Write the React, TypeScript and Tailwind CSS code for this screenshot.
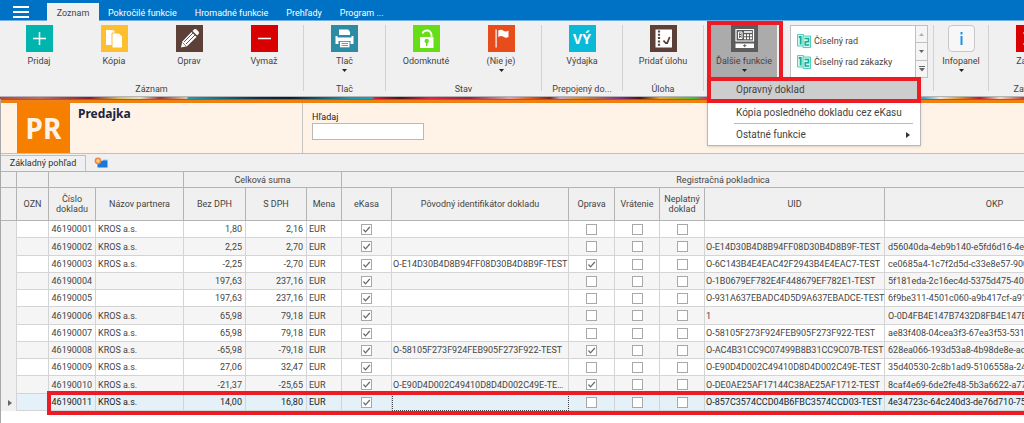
import type { ReactNode } from "react";

type DocumentRow = {
  id: string;
  partner: string;
  net: string;
  gross: string;
  originalId: string;
  correction: boolean;
  uid: string;
  okp: string;
};

const ROWS: DocumentRow[] = [
  { id: "46190001", partner: "KROS a.s.", net: "1,80", gross: "2,16", originalId: "", correction: false, uid: "", okp: "" },
  { id: "46190002", partner: "KROS a.s.", net: "2,25", gross: "2,70", originalId: "", correction: false, uid: "O-E14D30B4D8B94FF08D30B4D8B9F-TEST", okp: "d56040da-4eb9b140-e5fd6d16-4e" },
  { id: "46190003", partner: "KROS a.s.", net: "-2,25", gross: "-2,70", originalId: "O-E14D30B4D8B94FF08D30B4D8B9F-TEST", correction: true, uid: "O-6C143B4E4EAC42F2943B4E4EAC7-TEST", okp: "ce0685a4-1c7f2d5d-c33e8e57-900" },
  { id: "46190004", partner: "", net: "197,63", gross: "237,16", originalId: "", correction: false, uid: "O-1B0679EF782E4F448679EF782E1-TEST", okp: "5f181eda-2c16ec4d-5375d475-40f" },
  { id: "46190005", partner: "", net: "197,63", gross: "237,16", originalId: "", correction: false, uid: "O-931A637EBADC4D5D9A637EBADCE-TEST", okp: "6f9be311-4501c060-a9b417cf-a91" },
  { id: "46190006", partner: "KROS a.s.", net: "65,98", gross: "79,18", originalId: "", correction: false, uid: "1", okp: "O-0D4FB4E147B7432D8FB4E147B7" },
  { id: "46190007", partner: "KROS a.s.", net: "65,98", gross: "79,18", originalId: "", correction: false, uid: "O-58105F273F924FEB905F273F922-TEST", okp: "ae83f408-04cea3f3-67ea3f53-531" },
  { id: "46190008", partner: "KROS a.s.", net: "-65,98", gross: "-79,18", originalId: "O-58105F273F924FEB905F273F922-TEST", correction: true, uid: "O-AC4B31CC9C07499B8B31CC9C07B-TEST", okp: "628ea066-193d53a8-4b98de8e-ad" },
  { id: "46190009", partner: "KROS a.s.", net: "27,06", gross: "32,47", originalId: "", correction: false, uid: "O-E90D4D002C49410D8D4D002C49E-TEST", okp: "35d40530-2c8b1ad9-5106558a-24" },
  { id: "46190010", partner: "KROS a.s.", net: "-21,37", gross: "-25,65", originalId: "O-E90D4D002C49410D8D4D002C49E-TE…", correction: true, uid: "O-DE0AE25AF17144C38AE25AF1712-TEST", okp: "8caf4e69-6de2fe48-5b3a6622-a77" },
  { id: "46190011", partner: "KROS a.s.", net: "14,00", gross: "16,80", originalId: "", correction: false, uid: "O-857C3574CCD04B6FBC3574CCD03-TEST", okp: "4e34723c-64c240d3-de76d710-75" },
];

const SELECTED_ID = "46190011";

const TABS = ["Pokročilé funkcie", "Hromadné funkcie", "Prehľady", "Program ..."];

function Caret() {
  return (
    <svg viewBox="0 0 5 3" className="h-[3px] w-[5px]" aria-hidden="true">
      <path d="M0 0h5L2.5 3z" fill="#222" />
    </svg>
  );
}

function RibbonButton({
  label,
  tile,
  caret,
  className = "w-[75px]",
  children,
}: {
  label: string;
  tile: string;
  caret?: boolean;
  className?: string;
  children: ReactNode;
}) {
  return (
    <button type="button" className={`flex h-[53px] shrink-0 flex-col items-center whitespace-nowrap ${className}`}>
      <span className={`flex size-[27px] shrink-0 items-center justify-center ${tile}`}>{children}</span>
      <span className="mt-[3px] leading-3">{label}</span>
      {caret && (
        <span className="mt-[2px] flex">
          <Caret />
        </span>
      )}
    </button>
  );
}

function RibbonGroup({
  label,
  className,
  children,
}: {
  label?: string;
  className: string;
  children: ReactNode;
}) {
  return (
    <section className={`flex shrink-0 flex-col justify-between pt-1 pb-px ${className}`}>
      <div className="flex justify-center">{children}</div>
      {label && <h2 className="text-center leading-3 whitespace-nowrap">{label}</h2>}
    </section>
  );
}

function Divider() {
  return <div className="mt-1 mb-[5px] w-px shrink-0 bg-[#d2d2d2]" />;
}

function SeriesIcon() {
  return (
    <svg viewBox="0 0 14 14" className="h-[14px] w-[14px]" fill="none" aria-hidden="true">
      <path d="M.5.5h6v11.500h-6z" fill="#d5f5ee" stroke="#4fd0ba" />
      <path d="M1.800 3h1.900v7.500" stroke="#12b096" strokeWidth="1.800" />
      <path d="M6 2h7.500v11.500H6z" fill="#d5f5ee" stroke="#4fd0ba" />
      <path d="M7.500 4.500h4v3.200H8.300v3.300h4" stroke="#12b096" strokeWidth="1.600" />
    </svg>
  );
}

function Ribbon() {
  return (
    <div className="flex h-[76px] border-b border-[#b5b5b5] bg-[#f0f0f0] text-[9px] text-[#444]">
      <RibbonGroup label="Záznam" className="w-[303px]">
        <RibbonButton label="Pridaj" tile="bg-[#00b5ad]">
          <svg viewBox="0 0 27 27" stroke="#fff" strokeWidth="1.500">
            <path d="M13.500 7v13M7 13.500h13" />
          </svg>
        </RibbonButton>
        <RibbonButton label="Kópia" tile="bg-[#fdbf2d]">
          <svg viewBox="0 0 27 27" fill="#fff">
            <path d="M5 5h7l2 2v13H5z" />
            <path d="M11 8h7l3.500 3.500V23H11z" stroke="#fdbf2d" />
          </svg>
        </RibbonButton>
        <RibbonButton label="Oprav" tile="bg-[#5d4037]">
          <svg viewBox="0 0 27 27" fill="#fff">
            <path d="M5 22.500l1.300-6L15.500 7l5 5-9.500 9.200z" />
            <path d="M16.500 6l1.800-1.700q1-.8 2 0l2.400 2.500q.8 1 0 2L21.200 10.600z" />
            <path d="M8 17l9-9M10 19l9-9" stroke="#5d4037" strokeWidth=".9" />
            <path d="M6.500 17.500l3.500 3.500" stroke="#5d4037" strokeWidth=".7" />
          </svg>
        </RibbonButton>
        <RibbonButton label="Vymaž" tile="bg-[#d80000]">
          <svg viewBox="0 0 27 27" stroke="#fff" strokeWidth="1.500">
            <path d="M7 13.500h13" />
          </svg>
        </RibbonButton>
      </RibbonGroup>
      <Divider />
      <RibbonGroup label="Tlač" className="w-[81px]">
        <RibbonButton label="Tlač" tile="bg-[#2c8ca3]" caret>
          <svg viewBox="0 0 27 27" fill="#fff">
            <path d="M8 4.500h9l2 2V10H8z" />
            <path d="M4.500 11h2v1.500h14V11h2v8h-3v-3H7.500v3h-3z" />
            <path d="M9 16.800h9.500v5.500H9z" />
            <path d="M10.500 18.500h6.500M10.500 20.500h6.500" stroke="#2c8ca3" strokeWidth=".8" />
          </svg>
        </RibbonButton>
      </RibbonGroup>
      <Divider />
      <RibbonGroup label="Stav" className="w-[155px]">
        <RibbonButton label="Odomknuté" tile="bg-[#67dd17]">
          <svg viewBox="0 0 27 27" fill="#fff">
            <path d="M7 12h13.500v11H7z" />
            <path d="M9.500 8.500q1-3 4.500-3t4.500 4V12" fill="none" stroke="#fff" strokeWidth="1.800" />
            <circle cx="13.700" cy="16" r="2.200" fill="#67dd17" />
            <path d="M13 17h1.500v4H13z" fill="#67dd17" />
          </svg>
        </RibbonButton>
        <RibbonButton label="(Nie je)" tile="bg-[#e84c1a]" caret>
          <svg viewBox="0 0 27 27" fill="#fff">
            <path d="M7.500 4.500h1.200v18H7.500zM10.300 5.500q3-1.500 5.200.2t5-.2v6.500q-2.500 1.500-5-.2t-5.200.4z" />
          </svg>
        </RibbonButton>
      </RibbonGroup>
      <Divider />
      <RibbonGroup label="Prepojený do..." className="w-20">
        <RibbonButton label="Výdajka" tile="bg-[#08b9d8]">
          <span className="font-['Noto_Sans',sans-serif] text-[14px] leading-none font-bold text-white">VÝ</span>
        </RibbonButton>
      </RibbonGroup>
      <Divider />
      <RibbonGroup label="Úloha" className="w-20">
        <RibbonButton label="Pridať úlohu" tile="bg-[#5d4037]">
          <svg viewBox="0 0 27 27" fill="none">
            <path d="M5.500 4.500h16.500v18H5.500z" fill="#fff" />
            <path d="M9 5.500v16" stroke="#5d4037" strokeWidth="2.200" strokeDasharray="2 1.300" />
            <path d="M13.500 15.500l2.200 2.500h1.500l2.500-6" stroke="#5d4037" strokeWidth="1.800" />
          </svg>
        </RibbonButton>
      </RibbonGroup>
      <Divider />
      <div className="flex w-[229px] shrink-0 pt-1 pl-[7px]">
        <div className="relative">
          <RibbonButton label="Ďalšie funkcie" tile="bg-[#5c5c5c]" caret className="w-[66px] bg-[#ababab]">
            <svg viewBox="0 0 27 27" fill="none">
              <path d="M5 4.500h17.500v11.500H5z" stroke="#fff" strokeWidth="1.200" />
              <path d="M7.500 7h3.500v6.500H7.500z" stroke="#fff" />
              <path d="M9.300 8v5" stroke="#fff" strokeDasharray="1 1" />
              <path d="M13 7h8" stroke="#fff" strokeWidth="1.600" />
              <path d="M13 10.300h8M13 13.300h8" stroke="#fff" strokeWidth="2" strokeDasharray="2 1" />
              <path d="M4.500 18.500h18.500v4.500H4.500z" fill="#fff" />
              <path d="M12 20.700h3.500M13.700 19.200v3" stroke="#555" strokeWidth=".9" />
            </svg>
          </RibbonButton>
          <div className="absolute -top-1 -left-1 h-[60px] w-[76px] border-4 border-[#ed1c24]" />
          <FunctionsMenu />
        </div>
        <SeriesGallery />
      </div>
      <Divider />
      <RibbonGroup className="w-[54px]">
        <RibbonButton label="Infopanel" tile="border border-[#c8c8c8] rounded-sm bg-[#f7f7f7]" caret className="w-[54px]">
          <svg viewBox="0 0 25 25" fill="#1e90e0">
            <path d="M11.500 6h2v2.500h-2zM11.500 10h2v9h-2z" />
          </svg>
        </RibbonButton>
      </RibbonGroup>
      <Divider />
      <RibbonGroup label="Zatvoriť" className="w-20">
        <RibbonButton label="Zatvor" tile="bg-[#d80000]">
          <svg viewBox="0 0 27 27" stroke="#fff" strokeWidth="1.500">
            <path d="M7.500 7.500l12 12M19.500 7.500l-12 12" />
          </svg>
        </RibbonButton>
      </RibbonGroup>
    </div>
  );
}

function FunctionsMenu() {
  return (
    <div
      role="menu"
      className="absolute top-[52px] -left-1 z-20 w-[214px] border border-[#b8b8b8] bg-white text-[10px] leading-3 text-[#444] shadow-sm"
    >
      <button
        type="button"
        role="menuitem"
        className="-mx-px -mt-px flex h-[26px] w-[214px] items-center border-4 border-[#ed1c24] bg-[#cdcdcd] pl-[25px]"
      >
        Opravný doklad
      </button>
      <button type="button" role="menuitem" className="flex h-5 w-full items-center pl-7 whitespace-nowrap">
        Kópia posledného dokladu cez eKasu
      </button>
      <div className="mr-[7px] ml-[26px] h-px bg-[#b8b8b8]" />
      <button type="button" role="menuitem" className="flex h-[21px] w-full items-center justify-between pr-[10px] pl-7">
        Ostatné funkcie
        <svg viewBox="0 0 4 6" className="h-[6px] w-1" aria-hidden="true">
          <path d="M0 0v6l4-3z" fill="#333" />
        </svg>
      </button>
    </div>
  );
}

function SeriesGallery() {
  return (
    <div className="ml-[13px] flex h-[53px] w-[138px] border border-[#c0c0c0] bg-white">
      <div className="flex flex-1 flex-col justify-center gap-[7px] pl-[6px]">
        {["Číselný rad", "Číselný rad zákazky"].map((label) => (
          <button key={label} type="button" className="flex items-center gap-[3px] leading-[14px] whitespace-nowrap">
            <SeriesIcon />
            {label}
          </button>
        ))}
      </div>
      <div className="flex w-3 flex-col divide-y divide-[#c0c0c0] border-l border-[#c0c0c0] bg-[#f5f5f5]">
        <button type="button" aria-label="Nahor" className="flex flex-1 items-center justify-center">
          <svg viewBox="0 0 5 3" className="h-[3px] w-[5px]">
            <path d="M0 3h5L2.500 0z" fill="#b0b0b0" />
          </svg>
        </button>
        <button type="button" aria-label="Nadol" className="flex flex-1 items-center justify-center">
          <svg viewBox="0 0 5 3" className="h-[3px] w-[5px]">
            <path d="M0 0h5L2.500 3z" fill="#666" />
          </svg>
        </button>
        <button type="button" aria-label="Viac" className="flex flex-1 items-center justify-center">
          <svg viewBox="0 0 6 6" className="size-[6px]">
            <path d="M0 0h6v1H0zM0 2h6L3 5.500z" fill="#666" />
          </svg>
        </button>
      </div>
    </div>
  );
}

function TitleBar() {
  return (
    <header className="flex h-[21px] items-end border-b border-[#6fb1e4] bg-[#0072c6] text-[9px] leading-5 text-white">
      <button type="button" aria-label="Menu" className="mb-[2px] ml-[13px] flex w-4 flex-col gap-[3px]">
        <span className="h-[2px] bg-white" />
        <span className="h-[2px] bg-white" />
        <span className="h-[2px] bg-white" />
      </button>
      <nav className="-mb-px ml-[18px] flex">
        <a href="#zoznam" className="h-[18px] w-[52px] bg-[#f0f0f0] text-center text-[#444]">
          Zoznam
        </a>
        <div className="flex h-[18px] gap-[18px] pl-[9px]">
          {TABS.map((tab) => (
            <a key={tab} href="#ribbon" className="whitespace-nowrap">
              {tab}
            </a>
          ))}
        </div>
      </nav>
    </header>
  );
}

function PageHeader() {
  return (
    <div className="flex h-[51px] border-b border-[#c0c0c0] bg-[#fff3e8] font-['Noto_Sans',sans-serif]">
      <div className="ml-4 flex w-[53px] shrink-0 items-center justify-center bg-[#f77f00] pb-px text-[28px] leading-none font-bold text-[#fff3e8]">
        PR
      </div>
      <h1 className="w-[233px] shrink-0 border-r border-[#c8c4c0] pt-[3px] pl-2 text-[12px] leading-4 font-bold text-[#22223c]">
        Predajka
      </h1>
      <div className="flex flex-col pt-2 pl-[9px]">
        <label htmlFor="search" className="font-[Roboto,sans-serif] text-[9px] leading-3 text-[#222]">
          Hľadaj
        </label>
        <input id="search" type="text" className="h-[17px] w-[112px] border border-[#b8b8b8] bg-white px-1 text-[9px]" />
      </div>
    </div>
  );
}

function CheckCell({ label, checked }: { label: string; checked: boolean }) {
  return (
    <td className="border-r border-b border-[#d4d4d4] p-0">
      <div className="grid place-items-center">
        <input
          type="checkbox"
          aria-label={label}
          checked={checked}
          readOnly
          className="col-start-1 row-start-1 size-[11px] appearance-none border border-[#a8a8a8] bg-white"
        />
        {checked && (
          <svg viewBox="0 0 11 11" className="col-start-1 row-start-1 size-[11px]" fill="none" aria-hidden="true">
            <path d="M2.500 5.500l2 2.300L8.800 3" stroke="#666" strokeWidth="1.200" />
          </svg>
        )}
      </div>
    </td>
  );
}

function DocumentTable() {
  const head = "border-r border-b border-[#b4b4b4] p-0 font-normal";
  const cell = "border-r border-b border-[#d4d4d4] p-0 whitespace-nowrap";

  return (
    <div className="overflow-hidden pb-3">
      <table className="w-[1104px] table-fixed border-separate border-spacing-0 text-[9px] leading-[10px] text-[#444]">
        <colgroup>
          <col className="w-4" />
          <col className="w-8" />
          <col className="w-[47px]" />
          <col className="w-[88px]" />
          <col className="w-[62px]" />
          <col className="w-[61px]" />
          <col className="w-[35px]" />
          <col className="w-[50px]" />
          <col className="w-[177px]" />
          <col className="w-[46px]" />
          <col className="w-[45px]" />
          <col className="w-[45px]" />
          <col className="w-[180px]" />
          <col className="w-[220px]" />
        </colgroup>
        <thead className="bg-[#f0f0f0]">
          <tr className="h-4">
            <td className={head} />
            <td className={head} />
            <td className={head} colSpan={2} />
            <th className={head} colSpan={3}>
              Celková suma
            </th>
            <th className={head} colSpan={7}>
              Registračná pokladnica
            </th>
          </tr>
          <tr className="h-[33px]">
            <td className={head} />
            <th className={head}>OZN</th>
            <th className={head}>Číslo dokladu</th>
            <th className={head}>Názov partnera</th>
            <th className={head}>Bez DPH</th>
            <th className={head}>S DPH</th>
            <th className={head}>Mena</th>
            <th className={head}>eKasa</th>
            <th className={head}>Pôvodný identifikátor dokladu</th>
            <th className={head}>Oprava</th>
            <th className={head}>Vrátenie</th>
            <th className={head}>Neplatný doklad</th>
            <th className={head}>UID</th>
            <th className={head}>OKP</th>
          </tr>
        </thead>
        <tbody>
          {ROWS.map((row, i) => {
            const selected = row.id === SELECTED_ID;
            const height = i % 4 === 1 ? "h-[18px]" : "h-[17px]";
            const tone = selected ? "bg-[#e5f1f9] text-[#222]" : i % 2 ? "bg-[#f5f5f5]" : "bg-white";
            return (
              <tr key={row.id} className={`relative ${height} ${tone}`}>
                <td className="border-r border-[#d4d4d4] bg-[#f0f0f0] p-0">
                  {selected && (
                    <>
                      <svg viewBox="0 0 4 6" className="ml-[7px] h-[6px] w-1" aria-hidden="true">
                        <path d="M0 0v6l4-3z" fill="#666" />
                      </svg>
                      <span className="absolute -top-[3px] right-0 -bottom-1 left-[46px] border-4 border-[#ed1c24]" />
                    </>
                  )}
                </td>
                <td className={cell} />
                <td className={`${cell} text-right`}>
                  <span className="pr-[3px]">{row.id}</span>
                </td>
                <td className={cell}>
                  <span className="pl-[2px]">{row.partner}</span>
                </td>
                <td className={`${cell} text-right`}>
                  <span className="pr-[3px]">{row.net}</span>
                </td>
                <td className={`${cell} text-right`}>
                  <span className="pr-[3px]">{row.gross}</span>
                </td>
                <td className={cell}>
                  <span className="pl-[2px]">EUR</span>
                </td>
                <CheckCell label={`eKasa ${row.id}`} checked />
                <td className={selected ? "border border-dotted border-[#444] p-0" : cell}>
                  <span className="pl-px">{row.originalId}</span>
                </td>
                <CheckCell label={`Oprava ${row.id}`} checked={row.correction} />
                <CheckCell label={`Vrátenie ${row.id}`} checked={false} />
                <CheckCell label={`Neplatný doklad ${row.id}`} checked={false} />
                <td className={cell}>
                  <span className="pl-px">{row.uid}</span>
                </td>
                <td className={cell}>
                  <span className="pl-[3px]">{row.okp}</span>
                </td>
              </tr>
            );
          })}
        </tbody>
      </table>
    </div>
  );
}

export default function App() {
  return (
    <div className="flex min-h-screen flex-col overflow-hidden bg-white font-[Roboto,sans-serif]">
      <TitleBar />
      <Ribbon />
      <div className="h-[2px] bg-[linear-gradient(90deg,#b8463c_0px,#c96a5c_40px,#8e1c2c_90px,#d8c25a_120px,#e8e0c0_140px,#a83030_160px,#e6c2a0_187px,#18a0b4_188px,#0b2d48_260px,#0c1c30_290px,#1898b0_350px,#18a0b4_372px,#e01838_375px,#501018_400px,#e82048_430px,#a02040_470px,#f09aa8_510px,#e85a18_530px,#902010_550px,#c8a0c0_560px,#e88a18_580px,#8a2a90_620px,#501010_640px,#f0a020_660px,#40c030_695px,#e03070_705px,#c03050_800px,#40a8d8_925px,#f0e8d8_940px,#e09020_960px,#c01820_980px,#f8d8c0_1000px,#c83a30_1024px)]" />
      <div className="flex-1 border-l border-[#a8a8a8]">
        <div className="h-1 border-t border-[#7a6a5a] bg-[#f08010]" />
        <PageHeader />
        <div className="flex h-[18px] items-end border-b border-[#b4b4b4] bg-[#f0f0f0]">
          <button
            type="button"
            className="h-4 w-[85px] border-t border-r border-[#c0c0c0] text-center text-[9px] leading-[15px] whitespace-nowrap text-[#333]"
          >
            Základný pohľad
          </button>
          <button type="button" aria-label="Nový pohľad" className="mb-[3px] ml-2">
            <svg viewBox="0 0 14 11" className="h-[11px] w-[14px]">
              <path d="M3.500 4h10v6.500h-10z" fill="#1a78d8" />
              <path d="M8 4l1.500-1.200h4V4z" fill="#4aa0ee" />
              <circle cx="4" cy="3.800" r="3.400" fill="#e8854a" />
              <circle cx="4" cy="3.800" r="1.900" fill="#ffd070" />
            </svg>
          </button>
        </div>
        <DocumentTable />
      </div>
    </div>
  );
}
